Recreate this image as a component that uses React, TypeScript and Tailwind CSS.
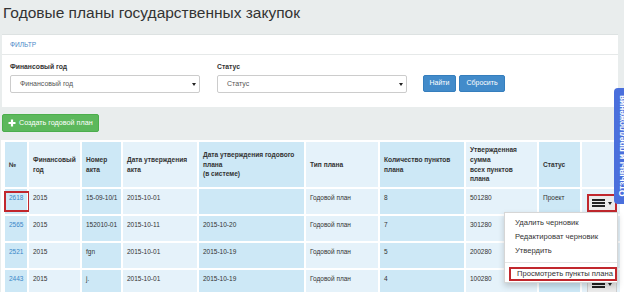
import React from "react";

const DARK = "bg-[#cde8f6]";
const LIGHT = "bg-[#e5f2fa]";
const cellBg = (i: number) => (i % 2 === 0 ? DARK : LIGHT);

const headers: React.ReactNode[] = [
  "№",
  <>Финансовый<br />год</>,
  <>Номер<br />акта</>,
  <>Дата утверждения<br />акта</>,
  <>Дата утверждения годового<br />плана<br />(в системе)</>,
  "Тип плана",
  <>Количество пунктов<br />плана</>,
  <>Утвержденная<br />сумма<br />всех пунктов<br />плана</>,
  "Статус",
  "",
];

const rows = [
  ["2618", "2015", "15-09-10/1", "2015-10-01", "", "Годовой план", "8", "501280", "Проект"],
  ["2565", "2015", "152010-01", "2015-10-11", "2015-10-20", "Годовой план", "7", "301280", ""],
  ["2521", "2015", "fgn", "2015-10-01", "2015-10-19", "Годовой план", "5", "200280", ""],
  ["2443", "2015", "j.", "2015-10-01", "2015-10-19", "Годовой план", "4", "100280", ""],
];

function Caret() {
  return (
    <span className="block w-0 h-0 border-l-[2px] border-r-[2px] border-t-[3px] border-l-transparent border-r-transparent border-t-[#222]" />
  );
}

function MenuButton({ highlight }: { highlight?: boolean }) {
  return (
    <div
      className={`mt-[5px] ml-[5px] w-[30px] h-[18px] flex items-center justify-center gap-[3px] bg-[#ebebeb] ${
        highlight ? "border-2 border-[#c1272d]" : "border border-[#cfcfcf]"
      }`}
    >
      <div className="flex flex-col gap-[1px]">
        <span className="block w-[13px] h-[2px] bg-[#222]" />
        <span className="block w-[13px] h-[2px] bg-[#222]" />
        <span className="block w-[13px] h-[2px] bg-[#222]" />
      </div>
      <Caret />
    </div>
  );
}

function SelectBox({ text, width }: { text: string; width: string }) {
  return (
    <div
      className={`${width} h-[18px] border border-[#cccccc] rounded-[2px] bg-white flex items-center justify-between pl-[9px] pr-[3px] text-[7px] text-[#555]`}
    >
      <span>{text}</span>
      <Caret />
    </div>
  );
}

export default function App() {
  return (
    <div className="relative w-[624px] h-[292px] overflow-hidden bg-[#e9eded] font-['Liberation_Sans',Arial,sans-serif] text-[#333]">
      {/* Title */}
      <div className="h-[34px] pl-[3px] pt-[2px] text-[15.5px] leading-[22px] text-[#333]">
        Годовые планы государственных закупок
      </div>

      {/* Filter panel */}
      <div className="ml-[2px] w-[616px] bg-white border-t border-[#dde2e2]">
        <div className="h-[20px] border-b border-[#e6e9e9] pl-[8px] flex items-center text-[6.6px] text-[#4a8ac8]">
          ФИЛЬТР
        </div>
        <div className="flex items-end pl-[8px] pt-[8px] pb-[14px]">
          <div className="flex flex-col">
            <div className="text-[6.8px] leading-[8px] font-bold mb-[4px]">Финансовый год</div>
            <SelectBox text="Финансовый год" width="w-[190px]" />
          </div>
          <div className="flex flex-col ml-[17px]">
            <div className="text-[6.8px] leading-[8px] font-bold mb-[4px]">Статус</div>
            <SelectBox text="Статус" width="w-[190px]" />
          </div>
          <div className="flex ml-[16px] mb-[1px] gap-[3px]">
            <div className="w-[33px] h-[17px] rounded-[2px] bg-[#428bca] border border-[#357ebd] text-white text-[7px] flex items-center justify-center">
              Найти
            </div>
            <div className="w-[46px] h-[17px] rounded-[2px] bg-[#428bca] border border-[#357ebd] text-white text-[7px] flex items-center justify-center">
              Сбросить
            </div>
          </div>
        </div>
      </div>

      {/* Create button */}
      <div className="mt-[7px] ml-[2px] w-[97px] h-[18px] rounded-[2px] bg-[#5cb85c] border border-[#4cae4c] text-white text-[7.2px] flex items-center pl-[5px] gap-[3px]">
        <svg width="8" height="8" viewBox="0 0 8 8">
          <path d="M4 0.5V7.5M0.5 4H7.5" stroke="white" strokeWidth="2.2" />
        </svg>
        <span>Создать годовой план</span>
      </div>

      {/* Table */}
      <div className="mt-[8px] ml-[1px] w-[623px] bg-white pl-[4px] pt-[2px]">
        <div className="grid grid-cols-[22px_51px_39px_74px_105px_72px_84px_71px_41px_38px] gap-[2px]">
          {headers.map((h, i) => (
            <div
              key={`h${i}`}
              className={`${cellBg(i)} h-[45px] flex items-center pl-[4px] text-[6.6px] leading-[9.6px] font-bold whitespace-nowrap overflow-hidden`}
            >
              <div>{h}</div>
            </div>
          ))}
          {rows.map((r, ri) => (
            <React.Fragment key={`r${ri}`}>
              {r.map((c, ci) => (
                <div
                  key={`c${ri}-${ci}`}
                  className={`${cellBg(ci)} relative h-[25px] pl-[4px] pt-[4px] text-[6.5px] leading-[10px] whitespace-nowrap ${
                    ci === 0 ? "text-[#3a87c8]" : ""
                  }`}
                >
                  {c}
                  {ri === 0 && ci === 0 && (
                    <div className="absolute left-[-1px] top-[2px] w-[26px] h-[21px] border-2 border-[#c1272d]" />
                  )}
                </div>
              ))}
              <div className={`${cellBg(9)} h-[25px]`}>
                {(ri === 0 || ri === 3) && <MenuButton highlight={ri === 0} />}
              </div>
            </React.Fragment>
          ))}
        </div>
      </div>

      {/* Dropdown menu */}
      <div className="absolute left-[504px] top-[212px] w-[114px] bg-white border border-[#d6d6d6] shadow-[0_3px_6px_rgba(0,0,0,0.18)] pt-[3px] pb-[1px] text-[7.6px] text-[#333] whitespace-nowrap">
        <div className="h-[14px] leading-[14px] pl-[10px]">Удалить черновик</div>
        <div className="h-[14px] leading-[14px] pl-[10px]">Редактироват черновик</div>
        <div className="h-[14px] leading-[14px] pl-[10px]">Утвердить</div>
        <div className="mt-[4px] h-px bg-[#e5e5e5]" />
        <div className="mt-[4px] ml-[4px] h-[14px] border-2 border-[#c1272d] pl-[6px] flex items-center">
          Просмотреть пункты плана
        </div>
      </div>

      {/* Feedback tab */}
      <div className="absolute left-[614px] top-[88px] w-[16px] h-[116px] rounded-l-[4px] bg-[#4a6fdc] flex items-center justify-center overflow-hidden">
        <span className="[writing-mode:vertical-rl] rotate-180 text-white text-[8.5px] font-bold whitespace-nowrap">
          Отзывы и предложения
        </span>
      </div>
    </div>
  );
}
